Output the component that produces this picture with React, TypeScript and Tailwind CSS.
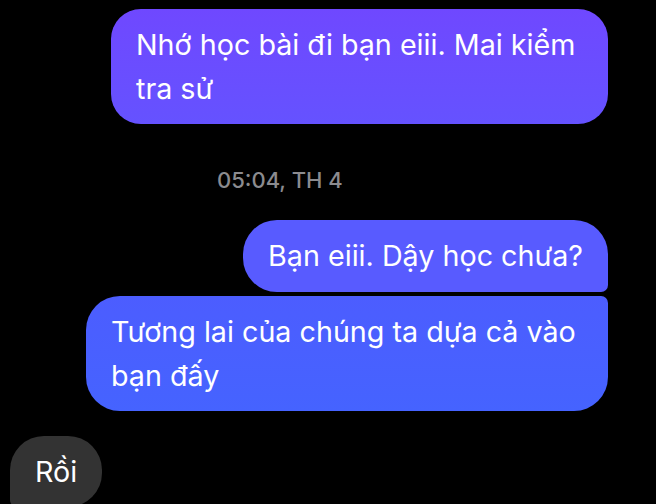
const font = { fontFamily: "Inter, 'Noto Sans', sans-serif" };

export default function App() {
  return (
    <div
      className="w-[656px] h-[504px] overflow-hidden bg-black text-white antialiased"
      style={font}
    >
      <div className="flex flex-col pt-[9px] pr-[48px]">
        {/* sent */}
        <div className="self-end w-[497px] rounded-[30px] bg-gradient-to-b from-[#6f48ff] to-[#6552ff] px-[25px] py-[14px] text-[28.7px] leading-[43.5px] whitespace-nowrap">
          Nhớ học bài đi bạn eiii. Mai kiểm
          <br />
          tra sử
        </div>

        {/* timestamp */}
        <div className="mt-[43px] pl-[217px] text-[22px] font-medium leading-[26px] text-[#8b8b8f]">
          05:04, TH 4
        </div>

        <div className="mt-[27px] flex flex-col items-end gap-[4.5px]">
          <div className="rounded-[34px] rounded-br-[7px] bg-[#585bff] px-[25px] py-[14px] text-[28.7px] leading-[43.5px] whitespace-nowrap">
            Bạn eiii. Dậy học chưa?
          </div>
          <div className="w-[522px] rounded-[34px] rounded-tr-[7px] bg-gradient-to-b from-[#4c5dff] to-[#4563ff] px-[25px] py-[14px] text-[28.7px] leading-[43.5px] whitespace-nowrap">
            Tương lai của chúng ta dựa cả vào
            <br />
            bạn đấy
          </div>
        </div>

        {/* received */}
        <div className="ml-[10px] mt-[24.5px] self-start rounded-[34px] rounded-bl-[7px] bg-[#333333] px-[25px] py-[14px] text-[28.7px] leading-[43.5px]">
          Rồi
        </div>
      </div>
    </div>
  );
}
